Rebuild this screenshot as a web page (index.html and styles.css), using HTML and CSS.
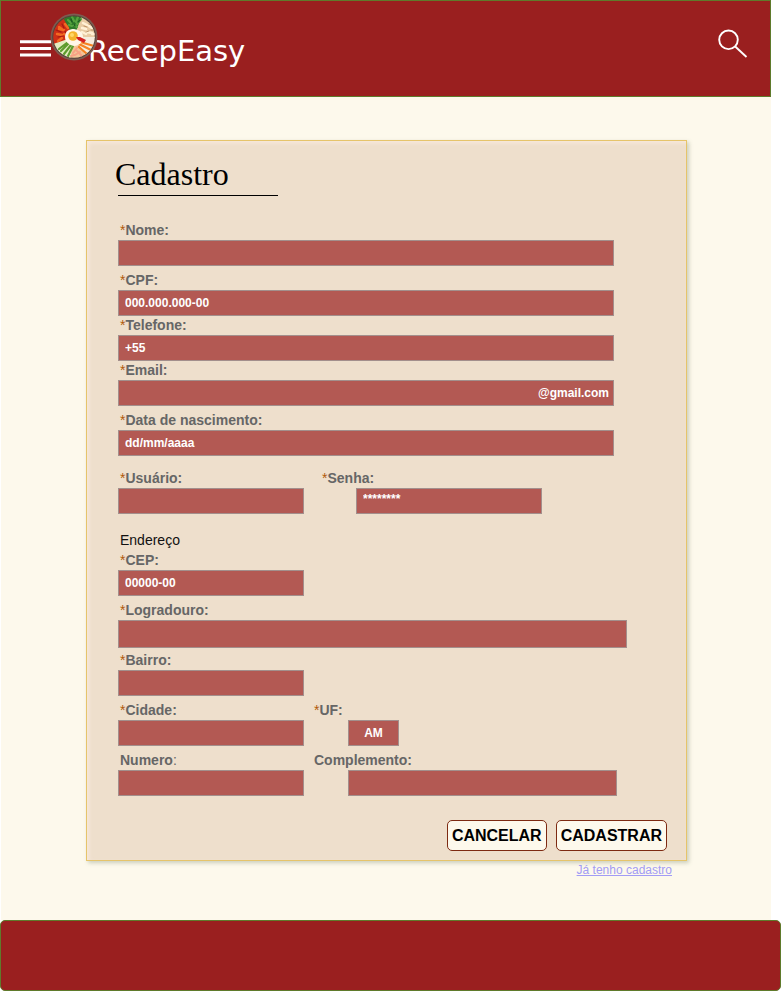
FILE: index.html
```html
<!DOCTYPE html>
<html lang="pt-BR">
<head>
<meta charset="utf-8">
<meta name="viewport" content="width=device-width, initial-scale=1">
<title>RecepEasy</title>
<link rel="stylesheet" href="styles.css">
</head>
<body>
<header class="topbar">
  <button class="icon-button menu" type="button" aria-label="Menu">
    <svg width="31" height="18" viewBox="0 0 31 18" fill="#fff">
      <path d="M0 0.2h31v3H0zM0 6.900h31v3H0zM0 13.500h31v3H0z"/>
    </svg>
  </button>
  <a class="brand" href="#">
    <svg class="bowl" width="48" height="48" viewBox="0 0 48 48">
      <defs><clipPath id="dish"><circle cx="24" cy="24" r="20.8"/></clipPath></defs>
      <circle cx="24" cy="24" r="23.5" fill="#7d5c50"/>
      <circle cx="24" cy="24" r="21.8" fill="#55423b"/>
      <g clip-path="url(#dish)">
        <path d="M24 24 14 2 0 18 2 34z" fill="#cf2f17"/>
        <path d="M24 24 12 3 34 2z" fill="#2f7a2a"/>
        <path d="M24 24 32 2 47 8 47 25z" fill="#e8cba4"/>
        <path d="M24 24 48 24 46 38 36 45z" fill="#f5ecdd"/>
        <path d="M24 24 38 46 16 48z" fill="#f3c596"/>
        <path d="M24 24 0 32 8 44 20 47z" fill="#e4ecc0"/>
        <g stroke-linecap="round" fill="none">
          <path d="m9 14 4 3m-6 4 5 1m3-11 3 4m-10 13 4-3m2-4 4 1m-9-6 5 1" stroke="#f36a22" stroke-width="2.4"/>
          <path d="m6 17 5 2m1-8 2 4m-6 9 5-1m2-5 2 5" stroke="#a91812" stroke-width="1.2"/>
          <path d="m18 7 3 3m1-6 2 4m4-4-2 5m5-3-4 5m-8 1 3 1m2-1 3 2" stroke="#55a33f" stroke-width="2.2"/>
          <path d="m21 6 1 3m6 0 2-2m-6 4 1 2" stroke="#1c5a22" stroke-width="1.3"/>
          <path d="m33 10 4 2m-5 3 4 1m3-3 3 2m-5 4 5 1m-10-1 4 2m6 0 2 0" stroke="#fff0d5" stroke-width="2.5"/>
          <path d="m34 13 3 1m2-3 2 1m-5 7 3-1m2-1 3 0" stroke="#b98d61" stroke-width="0.9"/>
          <path d="m9 36 9-7m-7 9 8-8m-5 11 7-9m-3 11 5-10" stroke="#5d9c2e" stroke-width="2.2"/>
          <path d="m30 29 14 4m-15-2 12 6m-12-3 8 7" stroke="#f58220" stroke-width="2.2"/>
          <path d="m23 40 4-5m-2 7 5-3m-9 4 3-1m3-4 5 5" stroke="#f7a184" stroke-width="2"/>
        </g>
        <path d="M15 24c0-6 4-8 9-8 5 1 9 3 9 8s-4 9-9 9c-5-1-9-4-9-9z" fill="#fff6e8"/>
        <circle cx="23" cy="23" r="4.800" fill="#f4b32b"/>
        <circle cx="22" cy="22" r="2" fill="#ffd868"/>
        <path d="m26 24 4 0 6 3-2 3-6-3z" fill="#d42121"/>
      </g>
    </svg>
    <span class="brand-name">RecepEasy</span>
  </a>
  <button class="icon-button search" type="button" aria-label="Buscar">
    <svg width="30" height="30" viewBox="0 0 30 30" fill="none" stroke="#fff" stroke-width="1.900">
      <circle cx="10.500" cy="10.800" r="9.300"/>
      <path d="m17.200 17.500 11.300 10.500"/>
    </svg>
  </button>
</header>

<main class="page">
  <form class="card" action="#">
    <h1 class="title">Cadastro</h1>

    <div class="field">
      <label for="nome"><i>*</i>Nome:</label>
      <input id="nome" type="text">
    </div>
    <div class="field tight">
      <label for="cpf"><i>*</i>CPF:</label>
      <input id="cpf" type="text" placeholder="000.000.000-00">
    </div>
    <div class="field tight">
      <label class="snug" for="telefone"><i>*</i>Telefone:</label>
      <input id="telefone" type="tel" placeholder="+55">
    </div>
    <div class="field">
      <label class="snug" for="email"><i>*</i>Email:</label>
      <div class="suffix-box">
        <input id="email" type="text">
        <span>@gmail.com</span>
      </div>
    </div>
    <div class="field">
      <label for="nascimento"><i>*</i>Data de nascimento:</label>
      <input id="nascimento" type="text" placeholder="dd/mm/aaaa">
    </div>

    <div class="row access">
      <div class="half">
        <label for="usuario"><i>*</i>Usuário:</label>
        <input id="usuario" type="text">
      </div>
      <div class="half shifted">
        <label for="senha"><i>*</i>Senha:</label>
        <input class="short" id="senha" type="password" placeholder="********">
      </div>
    </div>

    <h2 class="section">Endereço</h2>
    <div class="row">
      <div class="half">
        <label for="cep"><i>*</i>CEP:</label>
        <input id="cep" type="text" placeholder="00000-00">
      </div>
    </div>
    <div class="field street">
      <label for="logradouro"><i>*</i>Logradouro:</label>
      <input id="logradouro" type="text">
    </div>
    <div class="row">
      <div class="half">
        <label for="bairro"><i>*</i>Bairro:</label>
        <input id="bairro" type="text">
      </div>
    </div>
    <div class="row">
      <div class="half">
        <label for="cidade"><i>*</i>Cidade:</label>
        <input id="cidade" type="text">
      </div>
      <div class="half shifted">
        <label for="uf"><i>*</i>UF:</label>
        <input class="state" id="uf" type="text" placeholder="AM">
      </div>
    </div>
    <div class="row">
      <div class="half">
        <label for="numero">Numero<span class="light">:</span></label>
        <input id="numero" type="text">
      </div>
      <div class="half shifted">
        <label for="complemento">Complemento:</label>
        <input id="complemento" type="text">
      </div>
    </div>

    <div class="actions">
      <button type="button">CANCELAR</button>
      <button type="submit">CADASTRAR</button>
    </div>
  </form>
  <a class="login-link" href="#">Já tenho cadastro</a>
</main>

<footer class="footer"></footer>
</body>
</html>
```
FILE: styles.css
```css
* {
  box-sizing: border-box;
}

body {
  margin: 0;
  min-height: 100vh;
  display: flex;
  flex-direction: column;
  background: #fff;
  font-family: "Liberation Sans", Arial, sans-serif;
}

.topbar {
  display: flex;
  align-items: flex-start;
  margin-right: 11px;
  padding: 13px 22px 34px 19px;
  background: #9a1f1f;
  border: 1px solid #5f7a2b;
}

.icon-button {
  padding: 0;
  border: 0;
  background: none;
  line-height: 0;
  cursor: pointer;
}

.menu {
  margin-top: 26px;
}

.search {
  margin: 15px 0 0 auto;
}

.brand {
  display: flex;
  height: 48px;
  margin-left: -1px;
  color: #fff;
  text-decoration: none;
}

.bowl {
  position: relative;
  z-index: 1;
  margin-top: -1px;
}

.brand-name {
  margin: 19px 0 0 -10px;
  font: 29px/36px "DejaVu Sans", Verdana, sans-serif;
}

.page {
  flex: 1;
  display: flex;
  flex-direction: column;
  margin: 0 11px 0 1px;
  padding: 43px 84px 43px 85px;
  background: #fdf9ec;
}

.card {
  padding: 13px 19px 9px 31px;
  background: #eedfcc;
  border: 1px solid #e6c46a;
  box-shadow: 2px 2px 4px rgba(90, 110, 80, 0.3), inset 2px 2px 4px rgba(255, 240, 230, 0.6);
}

.title {
  width: 160px;
  margin: 0 0 24px;
  border-bottom: 1px solid #000;
  font: 32px/41px "Liberation Serif", serif;
  color: #000;
  text-indent: -3px;
}

.field {
  margin: 0 53px 4px 0;
}

.tight {
  margin-bottom: 0;
}

.street {
  margin: 0 40px 2px 0;
}

.street input {
  height: 28px;
}

label {
  display: block;
  padding-left: 2px;
  font-size: 14px;
  line-height: 20px;
  font-weight: bold;
  color: #666;
}

label.snug {
  line-height: 19px;
}

label i {
  font-style: normal;
  font-weight: normal;
  color: #b05a0a;
}

.light {
  font-weight: normal;
}

input {
  display: block;
  width: 100%;
  height: 26px;
  padding: 0 6px;
  border: 1px solid #a38f8c;
  border-radius: 0;
  background: #b35953;
  color: #fff;
  font: bold 12px "Liberation Sans", Arial, sans-serif;
}

input::placeholder {
  color: #fff;
  opacity: 1;
}

.suffix-box {
  display: flex;
  align-items: center;
  height: 26px;
  padding-right: 4px;
  border: 1px solid #a38f8c;
  background: #b35953;
  color: #fff;
  font-size: 12px;
  font-weight: bold;
}

.suffix-box input {
  flex: 1;
  height: 24px;
  border: 0;
}

.row {
  display: grid;
  grid-template-columns: 186px 1fr;
  column-gap: 8px;
  margin: 0 50px 4px 0;
}

.access {
  column-gap: 16px;
  margin-top: 12px;
  margin-bottom: 16px;
}

.shifted input {
  width: auto;
  min-width: calc(100% - 36px);
  margin-left: 36px;
}

.shifted .short {
  width: 186px;
  min-width: 0;
  padding-bottom: 4px;
}

.shifted .state {
  width: 51px;
  min-width: 0;
  text-align: center;
}

.section {
  margin: 0;
  padding-left: 2px;
  font-size: 14px;
  line-height: 20px;
  font-weight: normal;
  color: #111;
}

.actions {
  display: flex;
  justify-content: flex-end;
  gap: 9px;
  margin-top: 24px;
}

.actions button {
  height: 31px;
  padding: 0 4px;
  border: 1px solid #7d2a12;
  border-radius: 5px;
  background: #fdf9ec;
  color: #000;
  font: bold 16px "Liberation Sans", Arial, sans-serif;
  cursor: pointer;
}

.login-link {
  align-self: flex-end;
  margin: 2px 15px 0 0;
  font-size: 12px;
  line-height: 14px;
  color: #a29cf5;
}

.footer {
  height: 71px;
  margin: 0 1px 1px 0;
  background: #9a1f1f;
  border: 1px solid #5f7a2b;
  border-radius: 5px;
}
```
